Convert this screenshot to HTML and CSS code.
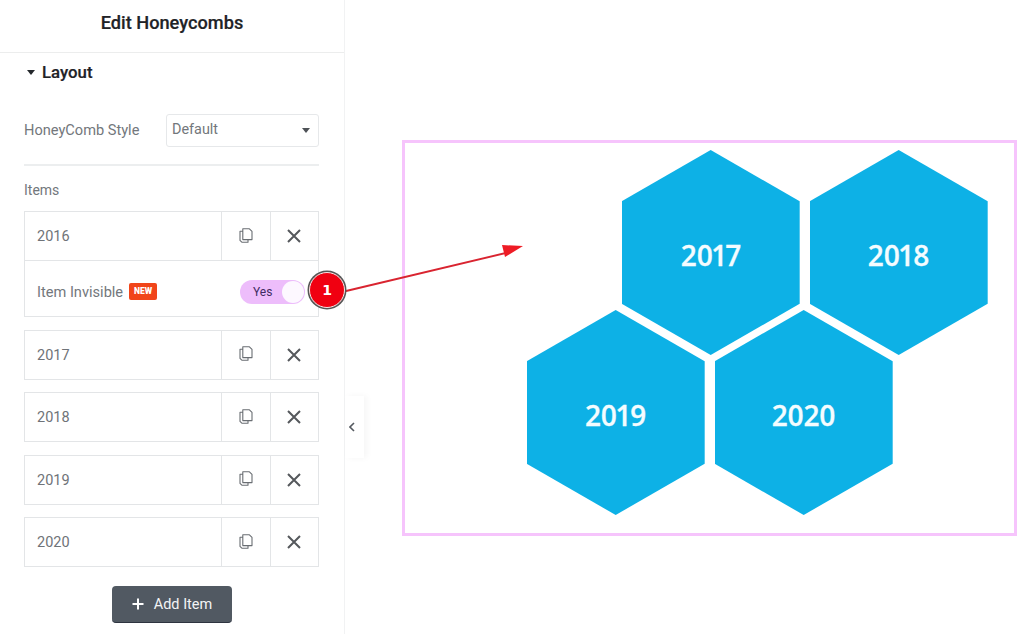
FILE: index.html
```html
<!DOCTYPE html>
<html lang="en">
<head>
<meta charset="utf-8">
<title>Edit Honeycombs</title>
<link rel="stylesheet" href="styles.css">
</head>
<body>
<div class="page">
  <aside class="panel">
    <header class="panel-head">Edit Honeycombs</header>
    <div class="section-title"><span class="caret"></span>Layout</div>
    <div class="field">
      <span class="field-label field-label-up">HoneyComb Style</span>
      <div class="select"><span class="select-value">Default</span><span class="caret caret-grey"></span></div>
    </div>
    <hr class="divider">
    <div class="items-label">Items</div>
    <div class="items">
      <div class="item">
        <div class="item-row">
          <span class="item-name">2016</span>
          <span class="item-btn"><svg class="ico" viewBox="0 0 14 15"><use href="#copy"/></svg></span>
          <span class="item-btn"><svg class="ico-x" viewBox="0 0 14 14"><use href="#close"/></svg></span>
        </div>
        <div class="item-extra">
          <span class="field-label">Item Invisible</span>
          <span class="new">NEW</span>
          <span class="toggle"><span class="toggle-text">Yes</span><span class="knob"></span></span>
        </div>
      </div>
      <div class="item"><div class="item-row"><span class="item-name">2017</span><span class="item-btn"><svg class="ico" viewBox="0 0 14 15"><use href="#copy"/></svg></span><span class="item-btn"><svg class="ico-x" viewBox="0 0 14 14"><use href="#close"/></svg></span></div></div>
      <div class="item"><div class="item-row"><span class="item-name">2018</span><span class="item-btn"><svg class="ico" viewBox="0 0 14 15"><use href="#copy"/></svg></span><span class="item-btn"><svg class="ico-x" viewBox="0 0 14 14"><use href="#close"/></svg></span></div></div>
      <div class="item"><div class="item-row"><span class="item-name">2019</span><span class="item-btn"><svg class="ico" viewBox="0 0 14 15"><use href="#copy"/></svg></span><span class="item-btn"><svg class="ico-x" viewBox="0 0 14 14"><use href="#close"/></svg></span></div></div>
      <div class="item"><div class="item-row"><span class="item-name">2020</span><span class="item-btn"><svg class="ico" viewBox="0 0 14 15"><use href="#copy"/></svg></span><span class="item-btn"><svg class="ico-x" viewBox="0 0 14 14"><use href="#close"/></svg></span></div></div>
    </div>
    <div class="add-wrap">
      <button class="add-btn"><svg class="plus" viewBox="0 0 12 12"><path d="M6 0.5v11M0.5 6h11"/></svg>Add Item</button>
    </div>
  </aside>
  <div class="collapse">
    <svg class="chev" viewBox="0 0 6 10"><path d="M5 1L1 5l4 4"/></svg>
  </div>
  <main class="stage">
    <div class="frame">
      <div class="hex-row hex-row-top">
        <div class="hex">2017</div>
        <div class="hex">2018</div>
      </div>
      <div class="hex-row hex-row-bottom">
        <div class="hex">2019</div>
        <div class="hex">2020</div>
      </div>
    </div>
  </main>
  <svg class="arrow" viewBox="0 0 200 60">
    <path class="arrow-line" d="M2 48.5L168 9"/>
    <path class="arrow-head" d="M181 3L160 2L163 14Z"/>
  </svg>
  <div class="marker"><span>1</span></div>
</div>
<svg class="defs" aria-hidden="true">
  <symbol id="copy" viewBox="0 0 14 15">
    <path d="M3.8 3.2H1v9.2l1.8 1.8h6.2V11.6M3.8 0.8V11.6h9.2V3.4L10.4 0.8z" fill="none" stroke="#6a6e73" stroke-width="1.1" stroke-linejoin="round"/>
  </symbol>
  <symbol id="close" viewBox="0 0 14 14">
    <path d="M1 1l12 12M13 1L1 13" fill="none" stroke="#55585c" stroke-width="2"/>
  </symbol>
</svg>
</body>
</html>
```

FILE: styles.css
```css
* { box-sizing: border-box; }
html, body { margin: 0; height: 100%; background: #fff; }
body { font-family: Roboto, "Liberation Sans", sans-serif; color: #6d7278; overflow: hidden; }
.page { position: relative; display: flex; width: 1024px; height: 634px; overflow: hidden; }

.panel { flex: 0 0 345px; height: 634px; border-right: 1px solid #f1f2f3; padding-bottom: 12px; }
.panel-head { height: 53px; padding-top: 13px; border-bottom: 1px solid #eceded; text-align: center; font-size: 18.2px; line-height: 20px; font-weight: 500; color: #1f2327; -webkit-text-stroke: 0.2px #1f2327; }
.section-title { display: flex; align-items: center; margin: 0 0 0 27px; height: 38px; font-size: 16.8px; font-weight: 500; color: #1f2327; -webkit-text-stroke: 0.2px #1f2327; }
.caret { display: inline-block; width: 0; height: 0; border-left: 4.5px solid transparent; border-right: 4.5px solid transparent; border-top: 5px solid #24282c; margin-right: 7px; }
.caret-grey { border-top-color: #4e5257; margin-right: 0; }

.field { display: flex; align-items: center; justify-content: space-between; margin: 23px 25px 0 24px; height: 33px; }
.field-label { font-size: 14.6px; color: #73777c; }
.field-label-up { padding-bottom: 2px; }
.select { display: flex; align-items: center; justify-content: space-between; width: 153px; height: 33px; padding: 0 8px 0 5px; border: 1px solid #e6e8ea; border-radius: 3px; font-size: 14.4px; color: #73777c; }
.select-value { padding-bottom: 2px; }
.divider { margin: 17px 25px 0 24px; border: 0; border-top: 2px solid #eceeef; height: 0; }
.items-label { margin: 15px 0 0 24px; height: 18px; line-height: 18px; font-size: 14px; color: #73777c; }

.items { display: flex; flex-direction: column; gap: 12.5px; margin: 12px 25px 0 24px; }
.item { border: 1px solid #e3e5e7; }
.item-row { display: flex; align-items: stretch; height: 48px; }
.item-name { flex: 1; display: flex; align-items: center; padding: 1px 0 0 12px; font-size: 14.5px; color: #6f7378; }
.item-btn { display: flex; align-items: center; justify-content: center; width: 48.5px; border-left: 1px solid #e3e5e7; }
.ico { width: 14px; height: 15px; margin-bottom: 2px; }
.ico-x { width: 14px; height: 14px; }
.item-extra { display: flex; align-items: center; height: 56px; padding: 6px 13px 0 12px; border-top: 1px solid #e3e5e7; }
.new { margin-left: 6px; width: 28px; height: 17px; line-height: 17px; text-align: center; background: #f1451a; border-radius: 2px; color: #fff; font-size: 8.5px; font-weight: 900; }
.toggle { display: flex; align-items: center; justify-content: space-between; margin-left: auto; width: 65px; height: 24px; padding: 0 1px 0 13px; border-radius: 12px; background: #edbdfb; }
.toggle-text { font-size: 12px; color: #3f2b63; }
.knob { width: 22px; height: 22px; border-radius: 50%; background: #fdf8ff; }

.add-wrap { display: flex; justify-content: center; margin: 19px 0 0 0; }
.add-btn { display: flex; align-items: center; justify-content: center; gap: 10px; width: 120px; height: 37px; border: 0; border-bottom: 1px solid #2e3440; border-radius: 4px; background: #515962; color: #f3f4f5; font-family: Roboto, "Liberation Sans", sans-serif; font-size: 14.5px; }
.plus { width: 12px; height: 12px; fill: none; stroke: #fff; stroke-width: 2; }

.collapse { position: absolute; left: 345px; top: 396px; display: flex; align-items: center; width: 19px; height: 62px; padding-left: 4px; background: #fff; box-shadow: 3px 0 6px rgba(0, 0, 0, 0.04); }
.chev { width: 6px; height: 10px; fill: none; stroke: #555a60; stroke-width: 1.6; }

.stage { flex: 1; padding: 140px 6px 0 57px; }
.frame { width: 615px; height: 396px; border: 3px solid #f6c4fc; padding-top: 7px; }
.hex-row { display: flex; gap: 10px; }
.hex-row-top { margin-left: 216.7px; }
.hex-row-bottom { margin-left: 121.7px; margin-top: -45px; }
.hex { display: flex; align-items: center; justify-content: center; width: 178px; height: 205px; padding-top: 5px; background: #0db1e6; clip-path: polygon(50% 0, 100% 25%, 100% 75%, 50% 100%, 0 75%, 0 25%); color: #f4fcff; font-family: "Open Sans", "Noto Sans", sans-serif; font-size: 28px; font-weight: 600; font-variant-numeric: proportional-nums; letter-spacing: -0.2px; -webkit-text-stroke: 0.3px #f4fcff; }

.arrow { position: absolute; left: 342px; top: 243px; width: 200px; height: 60px; }
.arrow-line { fill: none; stroke: #d92430; stroke-width: 1.9; }
.arrow-head { fill: #ee1c25; }
.marker { position: absolute; left: 309px; top: 272px; display: flex; align-items: center; justify-content: center; width: 36px; height: 36px; border-radius: 50%; background: #f00011; border: 1.5px solid #f7e6e6; box-shadow: 0 0 0 1.5px #555; color: #fff; font-family: "DejaVu Sans", "Liberation Sans", sans-serif; font-size: 14px; font-weight: 700; }
.defs { position: absolute; width: 0; height: 0; }
```
